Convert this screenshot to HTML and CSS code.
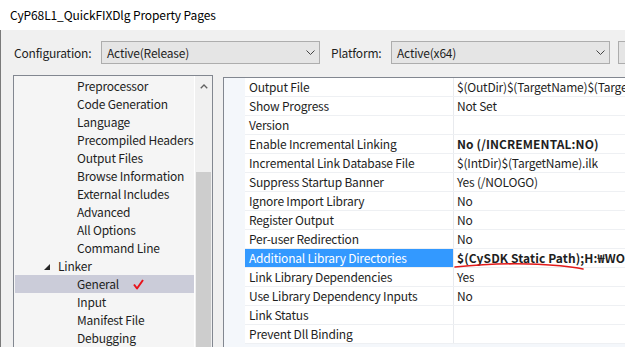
FILE: index.html
```html
<!DOCTYPE html>
<html lang="en">
<head>
<meta charset="UTF-8">
<title>CyP68L1_QuickFIXDlg Property Pages</title>
<link rel="stylesheet" href="styles.css">
</head>
<body>
<div class="window">
  <div class="titlebar">CyP68L1_QuickFIXDlg Property Pages</div>

  <div class="dialog">
    <div class="config-row">
      <span class="label label-config">Configuration:</span>
      <div class="combo">
        <span>Active(Release)</span>
        <svg class="chev" width="9" height="5" viewBox="0 0 9 5"><path d="M0.5 0.5 L4.5 4.5 L8.5 0.5" fill="none" stroke="#444" stroke-width="1"/></svg>
      </div>
      <span class="label label-platform">Platform:</span>
      <div class="combo">
        <span>Active(x64)</span>
        <svg class="chev" width="9" height="5" viewBox="0 0 9 5"><path d="M0.5 0.5 L4.5 4.5 L8.5 0.5" fill="none" stroke="#444" stroke-width="1"/></svg>
      </div>
      <div class="btn-stub"></div>
    </div>

    <div class="panes">
      <div class="tree">
        <div class="tree-list">
          <div class="node">Preprocessor</div>
          <div class="node">Code Generation</div>
          <div class="node">Language</div>
          <div class="node">Precompiled Headers</div>
          <div class="node">Output Files</div>
          <div class="node">Browse Information</div>
          <div class="node">External Includes</div>
          <div class="node">Advanced</div>
          <div class="node">All Options</div>
          <div class="node">Command Line</div>
          <div class="node node-parent">
            <svg class="expander" width="6" height="6" viewBox="0 0 6 6"><polygon points="6,0 6,6 0,6" fill="#262626"/></svg>
            Linker
          </div>
          <div class="node selected">General
            <svg class="check" width="11" height="11" viewBox="0 0 11 11"><path d="M1 5.5 L4 9.5 L10 1" fill="none" stroke="#e8141c" stroke-width="2" stroke-linejoin="round"/></svg>
          </div>
          <div class="node">Input</div>
          <div class="node">Manifest File</div>
          <div class="node">Debugging</div>
        </div>
        <div class="scrollbar">
          <svg class="arrow" width="8" height="5" viewBox="0 0 8 5"><path d="M0.5 4.5 L4 1 L7.5 4.5" fill="none" stroke="#606060" stroke-width="1.4"/></svg>
          <div class="thumb"></div>
        </div>
      </div>

      <div class="grid">
        <div class="row"><div class="name">Output File</div><div class="value">$(OutDir)$(TargetName)$(TargetExt)</div></div>
        <div class="row"><div class="name">Show Progress</div><div class="value">Not Set</div></div>
        <div class="row"><div class="name">Version</div><div class="value"></div></div>
        <div class="row"><div class="name">Enable Incremental Linking</div><div class="value bold">No (/INCREMENTAL:NO)</div></div>
        <div class="row"><div class="name">Incremental Link Database File</div><div class="value">$(IntDir)$(TargetName).ilk</div></div>
        <div class="row"><div class="name">Suppress Startup Banner</div><div class="value">Yes (/NOLOGO)</div></div>
        <div class="row"><div class="name">Ignore Import Library</div><div class="value">No</div></div>
        <div class="row"><div class="name">Register Output</div><div class="value">No</div></div>
        <div class="row"><div class="name">Per-user Redirection</div><div class="value">No</div></div>
        <div class="row row-selected"><div class="name">Additional Library Directories</div><div class="value bold">$(CySDK Static Path);H:₩WO</div></div>
        <div class="row"><div class="name">Link Library Dependencies</div><div class="value">Yes</div></div>
        <div class="row"><div class="name">Use Library Dependency Inputs</div><div class="value">No</div></div>
        <div class="row"><div class="name">Link Status</div><div class="value"></div></div>
        <div class="row"><div class="name">Prevent Dll Binding</div><div class="value"></div></div>
      </div>
    </div>
  </div>

  <!-- hand-drawn red underline annotation -->
  <svg class="scribble" width="140" height="10" viewBox="0 0 140 10"><path d="M1 6 Q 40 2 75 3 Q 110 4 129 8" fill="none" stroke="#e21a1a" stroke-width="1.6" stroke-linecap="round"/></svg>
</div>
</body>
</html>
```

FILE: styles.css
```css
body {
  margin: 0;
  width: 625px;
  height: 347px;
  overflow: hidden;
  background: #fff;
  font-family: "Noto Sans CJK KR", "Noto Sans", sans-serif;
  font-size: 12px;
  letter-spacing: -0.2px;
  color: #1e1e1e;
}

.window {
  position: relative;
  height: 347px;
}

.titlebar {
  height: 30px;
  line-height: 30px;
  padding-left: 10px;
  font-size: 12px;
  letter-spacing: -0.1px;
  color: #000;
  background: #fff;
}

.dialog {
  height: 317px;
  background: #f0f0f0;
  border-left: 1px solid #7a7a7a;
  overflow: hidden;
}

.config-row {
  display: flex;
  align-items: center;
  height: 23px;
  margin-top: 11px;
  white-space: nowrap;
}

.label {
  flex-shrink: 0;
}

.label-config {
  margin-left: 13px;
  width: 87px;
}

.label-platform {
  margin-left: 11px;
  width: 60px;
}

.combo {
  flex-shrink: 0;
  width: 206px;
  height: 21px;
  border: 1px solid #adadad;
  background: #e5e5e5;
  display: flex;
  align-items: center;
  justify-content: space-between;
  padding: 0 4px 0 5px;
  width: 208px;
}

.btn-stub {
  flex-shrink: 0;
  margin-left: 8px;
  width: 40px;
  height: 21px;
  border: 1px solid #adadad;
  background: #e5e5e5;
}

.panes {
  display: flex;
  align-items: flex-start;
  margin-top: 11px;
}

.tree {
  margin-left: 12px;
  width: 198px;
  height: 300px;
  border: 1px solid #828790;
  background: #f5f5f5;
  display: flex;
  flex-shrink: 0;
}

.tree-list {
  flex: 1;
  min-width: 0;
  overflow: hidden;
  padding-top: 1px;
}

.node {
  height: 18px;
  line-height: 18px;
  padding-left: 62px;
  margin-left: 1px;
  white-space: nowrap;
  display: flex;
  align-items: center;
}

.node-parent {
  padding-left: 29px;
}

.expander {
  margin-right: 8px;
  margin-top: 1px;
}

.selected {
  background: #cbccd9;
}

.check {
  margin-left: 14px;
}

.scrollbar {
  flex-shrink: 0;
  width: 17px;
  background: #f0f0f0;
  border-left: 1px solid #fff;
  display: flex;
  flex-direction: column;
  align-items: center;
}

.arrow {
  margin-top: 8px;
}

.thumb {
  width: 15px;
  height: 220px;
  margin-top: 83px;
  background: #cdcdcd;
}

.grid {
  margin-left: 10px;
  margin-top: 2px;
  flex: 1;
  min-width: 0;
  border: 1px solid #828790;
  border-right: none;
  background: #f4f7fb;
  padding-left: 21px;
  height: 300px;
}

.row {
  display: flex;
  height: 18px;
  line-height: 18px;
  border-bottom: 1px solid #eef0f3;
  background: #fff;
  white-space: nowrap;
}

.name {
  width: 204px;
  padding-left: 4px;
  border-right: 1px solid #e8eaee;
  flex-shrink: 0;
}

.value {
  padding-left: 3px;
  overflow: hidden;
}

.bold {
  font-weight: bold;
  letter-spacing: 0.1px;
}

.row-selected .name {
  background: #3399ff;
  color: #fff;
}

.scribble {
  position: absolute;
  left: 454px;
  top: 261px;
}
```
